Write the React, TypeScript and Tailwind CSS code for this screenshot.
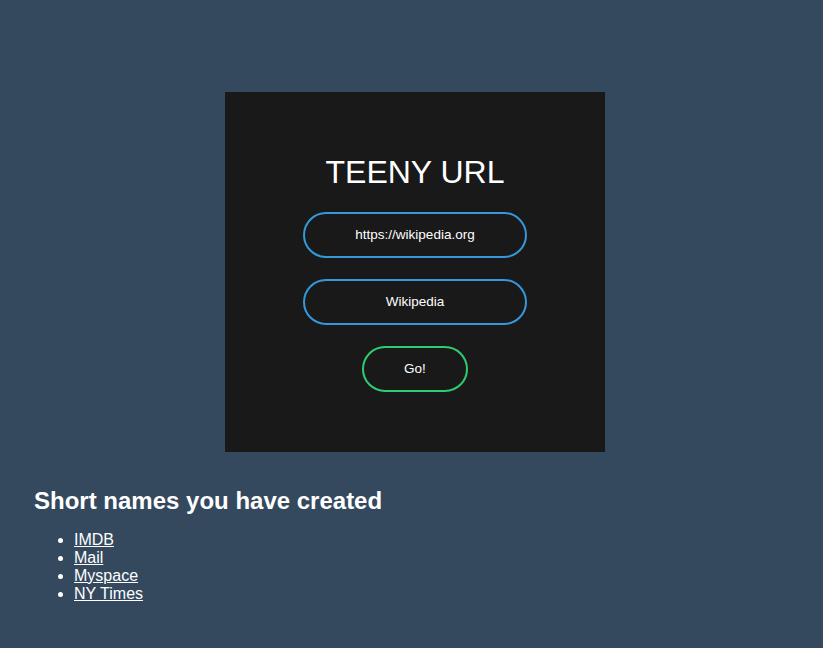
import React from "react";

export default function App() {
  return (
    <div className="min-h-[648px] w-full bg-[#34495e] text-white font-['Liberation_Sans',Arial,sans-serif]">
      <div className="pt-[92px]">
        <div className="ml-[225px] w-[380px] h-[360px] bg-[#191919] flex flex-col items-center pt-[62px]">
          <h1 className="text-[32px] leading-[37px] font-normal mb-[21px]">TEENY URL</h1>
          <div className="w-[224px] h-[46px] rounded-[24px] border-2 border-[#3498db] flex items-center justify-center text-[13.5px]">
            https://wikipedia.org
          </div>
          <div className="mt-[21px] w-[224px] h-[46px] rounded-[24px] border-2 border-[#3498db] flex items-center justify-center text-[13.5px]">
            Wikipedia
          </div>
          <div className="mt-[21px] w-[106px] h-[46px] rounded-[24px] border-2 border-[#2ecc71] flex items-center justify-center text-[13.5px]">
            Go!
          </div>
        </div>
      </div>
      <div className="pl-[34px] pt-[35px]">
        <h2 className="text-[24px] leading-[28px] font-bold">Short names you have created</h2>
        <ul className="mt-[16px] list-disc pl-[40px] text-[16px] leading-[18px]">
          <li><a className="underline" href="#">IMDB</a></li>
          <li><a className="underline" href="#">Mail</a></li>
          <li><a className="underline" href="#">Myspace</a></li>
          <li><a className="underline" href="#">NY Times</a></li>
        </ul>
      </div>
    </div>
  );
}
